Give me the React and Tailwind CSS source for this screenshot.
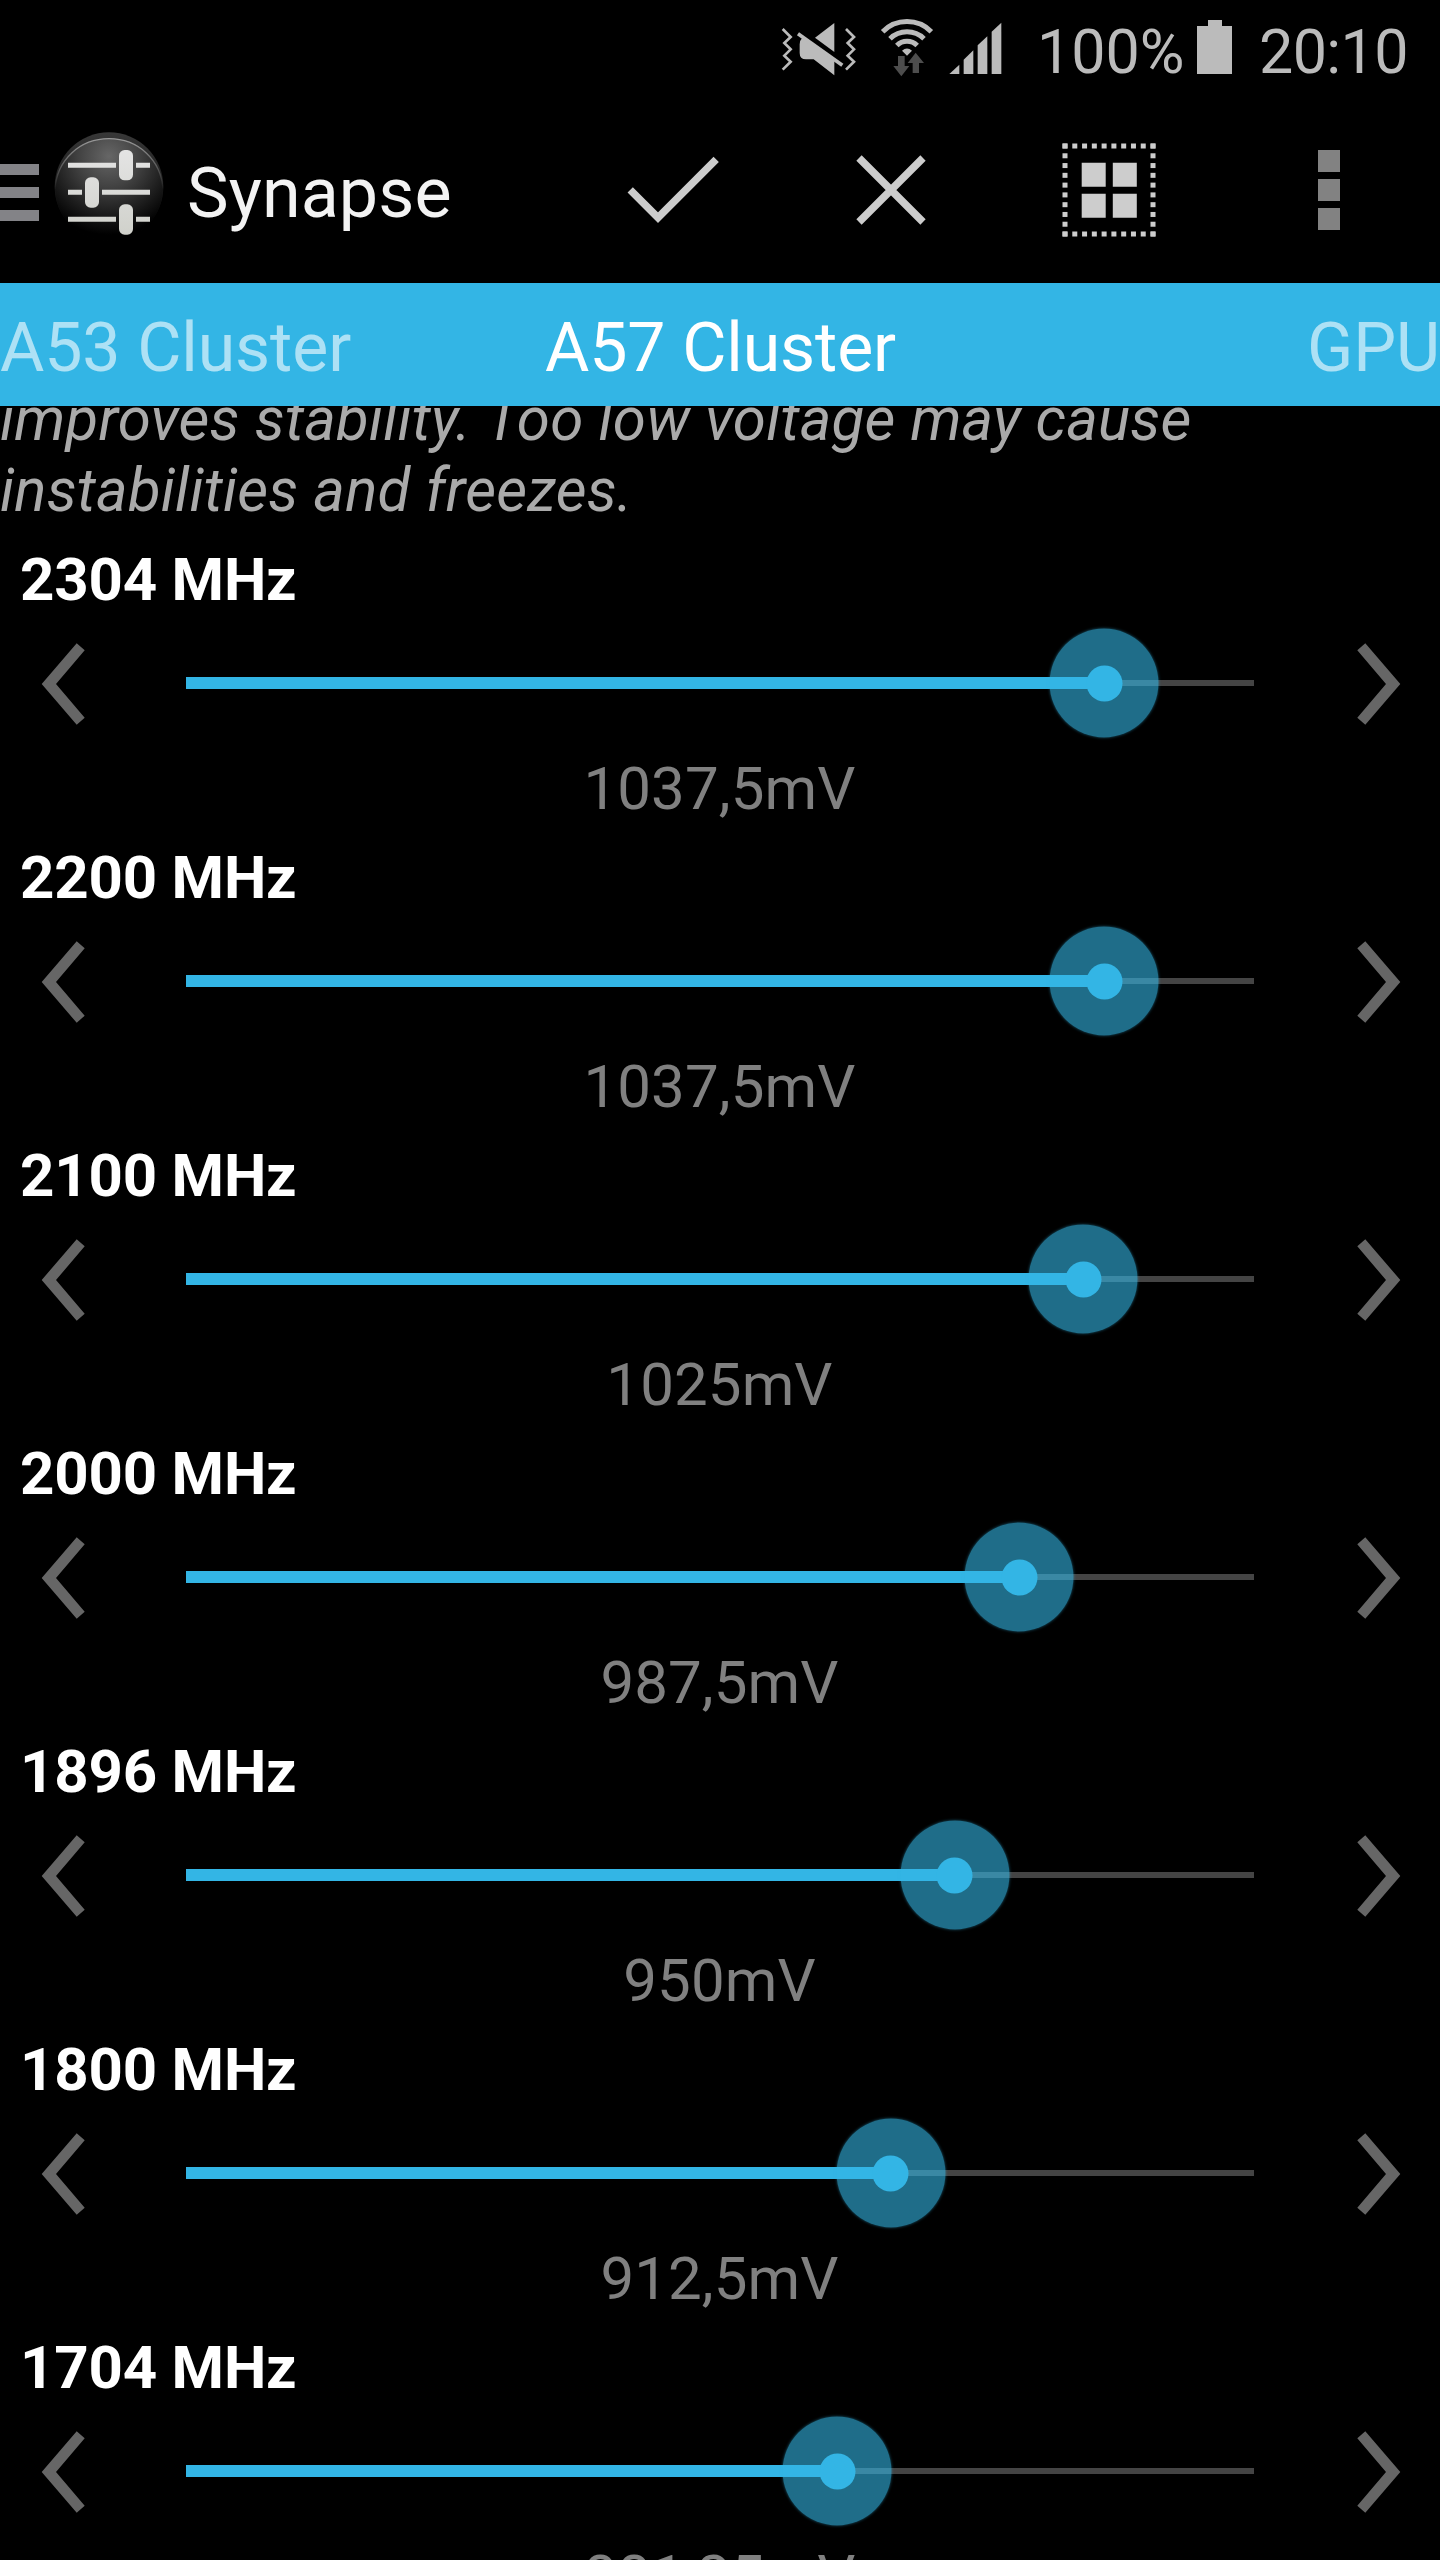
import React, { useState } from "react";

const MIN_MV = 500;
const MAX_MV = 1125;

const frequencies = [
  { mhz: 2304, mv: 1037.5 },
  { mhz: 2200, mv: 1037.5 },
  { mhz: 2100, mv: 1025 },
  { mhz: 2000, mv: 987.5 },
  { mhz: 1896, mv: 950 },
  { mhz: 1800, mv: 912.5 },
  { mhz: 1704, mv: 881.25 },
];

const VibrateIcon = () => (
  <svg className="h-[60px] w-[76px]" viewBox="62 50 228 180" fill="#bbb">
    <g fill="none" stroke="#bbb" strokeWidth="8">
      <path d="M67 86 91 110 72 128 91 147 72 166 91 184 67 208" />
      <path d="M257 86 281 110 262 128 281 147 262 166 281 184 257 208" />
    </g>
    <path d="M222 68V155L164 112Z" />
    <path d="M126 112 222 182V225L160 177H137Q118 177 118 158V132Q118 120 126 112Z" />
    <path d="M113 100 246 195" stroke="#bbb" strokeWidth="11" />
  </svg>
);

const WifiIcon = () => (
  <svg className="h-[60px] w-[54px]" viewBox="360 50 162 180">
    <g fill="none" stroke="#bbb" strokeWidth="15">
      <path d="M368 94A103 103 0 0 1 514 94" />
      <path d="M390 115A73 73 0 0 1 492 115" />
      <path d="M410.500 135.500A43 43 0 0 1 471.500 135.500" />
    </g>
    <path d="M441 166 426 151Q441 138 456 151Z" fill="#bbb" />
    <path d="M414 167H434V197H448L424 228 400 197H414Z" fill="#4d4d4d" />
    <path d="M467 157 492 188H477V218H458V188H443Z" fill="#4d4d4d" />
  </svg>
);

const SignalIcon = () => (
  <svg className="h-[60px] w-[53px]" viewBox="566 50 159 180" fill="#bbb">
    <path d="M567 221 597 193V221Z" />
    <path d="M610 221V178L639 150V221Z" />
    <path d="M652 221V135L681 108V221Z" />
    <path d="M694 221V94L723 67V221Z" />
  </svg>
);

const StatusBar = () => (
  <div className="flex h-24 items-start pl-[781px] pt-[17px] text-[61px] leading-[70px] text-[#bbb]">
    <VibrateIcon />
    <div className="ml-[23px]">
      <WifiIcon />
    </div>
    <div className="ml-[15px]">
      <SignalIcon />
    </div>
    <span className="ml-[35px] w-[160px]">100%</span>
    <svg className="mt-[3px] h-[54px] w-[35px]" viewBox="0 0 35 54" fill="#bbb">
      <path d="M11 0H25V6H35V54H0V6H11Z" />
    </svg>
    <span className="ml-[27px] tracking-[-0.6px]">20:10</span>
  </div>
);

const AppIcon = () => (
  <svg className="h-[112px] w-[112px]" viewBox="159 64 336 336">
    <defs>
      <radialGradient id="disc" gradientUnits="userSpaceOnUse" cx="327" cy="140" r="235">
        <stop offset="0" stopColor="#666" />
        <stop offset="0.4" stopColor="#414141" />
        <stop offset="0.8" stopColor="#151515" />
        <stop offset="1" stopColor="#000" />
      </radialGradient>
      <linearGradient id="rim" x1="0" y1="0" x2="0" y2="1">
        <stop offset="0" stopColor="#999" />
        <stop offset="1" stopColor="#999" stopOpacity="0" />
      </linearGradient>
      <linearGradient id="edge" x1="0" y1="0" x2="0" y2="1">
        <stop offset="0" stopColor="#383838" />
        <stop offset="0.5" stopColor="#1c1c1c" />
        <stop offset="1" stopColor="#000" />
      </linearGradient>
      <linearGradient id="knob" gradientUnits="userSpaceOnUse" x1="0" y1="120" x2="0" y2="376">
        <stop offset="0" stopColor="#e4e4e4" />
        <stop offset="1" stopColor="#d0d1cb" />
      </linearGradient>
    </defs>
    <circle cx="327" cy="231" r="163" fill="url(#edge)" />
    <path d="M165 240C170 150 240 87 327 87S484 150 489 240C484 330 415 393 327 393S170 330 165 240Z" fill="url(#disc)" />
    <path d="M165 240C170 150 240 87 327 87S484 150 489 240" fill="none" stroke="url(#rim)" strokeWidth="4" />
    <g fill="url(#knob)">
      <path d="M204 159H348V174H204ZM408 159H450V174H408Z" />
      <path d="M204 240H246V255H204ZM306 240H450V255H306Z" />
      <path d="M204 321H348V336H204ZM408 321H450V336H408Z" />
      <rect x="357" y="121" width="42" height="91" rx="17" />
      <rect x="255" y="203" width="42" height="91" rx="17" />
      <rect x="357" y="284" width="42" height="91" rx="17" />
    </g>
  </svg>
);

const dots = [0, 1, 2, 3, 4, 5, 6, 7, 8, 9];

const SelectAllIcon = () => (
  <svg className="h-[94px] w-[94px]" viewBox="0 0 94 94" fill="#cdcdcd">
    {dots.map((i) => (
      <g key={i}>
        <rect x={0.5 + i * 9.78} y="0.5" width="5" height="5" />
        <rect x={0.5 + i * 9.78} y="88.500" width="5" height="5" />
        <rect x="0.5" y={0.5 + i * 9.78} width="5" height="5" />
        <rect x="88.500" y={0.5 + i * 9.78} width="5" height="5" />
      </g>
    ))}
    <path d="M19.700 19.700h24v24h-24ZM50.800 19.700h24v24h-24ZM19.700 50.700h24v24h-24ZM50.800 50.700h24v24h-24Z" />
  </svg>
);

const ActionBar = () => (
  <div className="flex h-[187px] items-start">
    <div className="mt-[68px] flex w-[39px] flex-col gap-3">
      <div className="h-[11px] bg-[#838387]" />
      <div className="h-[11px] bg-[#838387]" />
      <div className="h-[11px] bg-[#838387]" />
    </div>
    <div className="ml-[14px] mt-[35px]">
      <AppIcon />
    </div>
    <h1 className="ml-[22px] mt-[56px] w-[440px] text-[70px] leading-[82px] tracking-[0.1px] text-[#f3f3f3]">
      Synapse
    </h1>
    <svg className="mt-[59px] h-[70px] w-[94px]" viewBox="627 155 94 70" fill="none" stroke="#ccc" strokeWidth="7.5">
      <path d="M630.200 189.800 658 217.600 716.200 159.400" />
    </svg>
    <svg className="ml-[134px] mt-[59px] h-[70px] w-[74px]" viewBox="855 155 74 70" fill="none" stroke="#ccc" strokeWidth="7.5">
      <path d="M859 158 923 222M923 158 859 222" />
    </svg>
    <div className="ml-[133px] mt-[47px]">
      <SelectAllIcon />
    </div>
    <div className="ml-[162px] mt-[54px] flex w-[22px] flex-col gap-[7px]">
      <div className="h-[22px] bg-[#828282]" />
      <div className="h-[22px] bg-[#828282]" />
      <div className="h-[22px] bg-[#828282]" />
    </div>
  </div>
);

const Tabs = () => (
  <div className="grid h-[123px] grid-cols-3 items-center bg-[#33b5e5] pt-[7px] text-[68px] leading-[80px] tracking-[-0.12px] text-white/60">
    <span>A53 Cluster</span>
    <span className="pl-px text-center text-white">A57 Cluster</span>
    <span className="text-right">GPU</span>
  </div>
);

const Chevron = ({ flip }) => (
  <svg
    className={flip ? "mt-[2px] h-[84px] w-[46px] -scale-x-100" : "mt-[2px] h-[84px] w-[46px]"}
    viewBox="0 0 46 84"
    fill="#666"
  >
    <path d="M1.700 42 36.700 1.200 44.700 8.300 16 42 44.700 75.700 36.700 82.800Z" />
  </svg>
);

const VoltageSlider = ({ mhz, mv, onChange }) => {
  const percent = ((mv - MIN_MV) / (MAX_MV - MIN_MV)) * 100;

  return (
    <div className="h-[298px] shrink-0">
      <h2 className="pl-5 font-bold tracking-[-0.2px] text-white">{mhz} MHz</h2>
      <div className="flex h-[136px] items-center pl-10 pr-[38px]">
        <button onClick={() => onChange(mv - 6.25)}>
          <Chevron />
        </button>
        <div className="relative ml-[100px] mr-[102px] h-[6px] flex-1 bg-[#444]">
          <div
            className="absolute -top-[3px] left-0 h-3 bg-[#33b5e5]"
            style={{ width: `${percent}%` }}
          />
          <div
            className="absolute top-1/2 flex size-[109px] -translate-x-1/2 -translate-y-1/2 items-center justify-center rounded-full bg-[#33b5e5]/60 shadow-[0_0_3px_rgba(51,181,229,0.5)]"
            style={{ left: `${percent}%` }}
          >
            <div className="size-9 rounded-full bg-[#33b5e5]" />
          </div>
        </div>
        <button onClick={() => onChange(mv + 6.25)}>
          <Chevron flip />
        </button>
      </div>
      <p className="mt-[2px] pr-px text-center tracking-[0.1px] text-[#808080]">
        {String(mv).replace(".", ",")}mV
      </p>
    </div>
  );
};

const App = () => {
  const [rows, setRows] = useState(frequencies);

  const handleChange = (index, mv) => {
    const next = Math.min(MAX_MV, Math.max(MIN_MV, mv));
    setRows(rows.map((row, i) => (i === index ? { ...row, mv: next } : row)));
  };

  return (
    <div className="flex h-[2560px] w-[1440px] flex-col overflow-hidden bg-black font-['Roboto',sans-serif]">
      <StatusBar />
      <ActionBar />
      <Tabs />
      <div className="flex min-h-0 flex-1 flex-col overflow-hidden text-[60px] leading-[71px]">
        {/* scrolled slightly under the tab strip */}
        <p className="-mt-[22px] mb-[18px] shrink-0 italic tracking-[0.17px] text-[#aaa]">
          improves stability. Too low voltage may cause
          <br />
          instabilities and freezes.
        </p>
        {rows.map((row, index) => (
          <VoltageSlider
            key={row.mhz}
            mhz={row.mhz}
            mv={row.mv}
            onChange={(mv) => handleChange(index, mv)}
          />
        ))}
      </div>
    </div>
  );
};

export default App;
